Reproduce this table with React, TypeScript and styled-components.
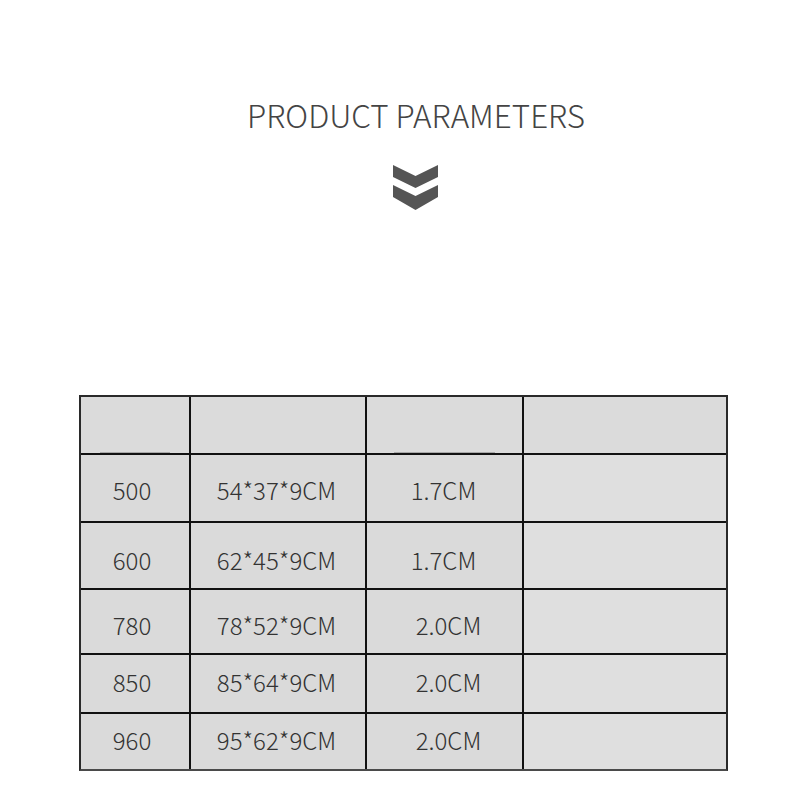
import React from "react";
import styled, { createGlobalStyle } from "styled-components";

interface SpecRow {
  model: string;
  size: string;
  thickness: string;
  height: number;
  lift: number;
  nudge: number;
}

// lift / nudge keep the text where it sits in the original artwork
const specRows: SpecRow[] = [
  { model: "500", size: "54*37*9CM", thickness: "1.7CM", height: 66, lift: 2, nudge: -2 },
  { model: "600", size: "62*45*9CM", thickness: "1.7CM", height: 65, lift: 8, nudge: -2 },
  { model: "780", size: "78*52*9CM", thickness: "2.0CM", height: 63, lift: 6, nudge: 8 },
  { model: "850", size: "85*64*9CM", thickness: "2.0CM", height: 57, lift: -4, nudge: 8 },
  { model: "960", size: "95*62*9CM", thickness: "2.0CM", height: 55, lift: -5, nudge: 8 },
];

const GlobalStyle = createGlobalStyle`
  html, body {
    margin: 0;
    padding: 0;
    background: #ffffff;
  }
  body {
    font-family: "Noto Sans CJK SC", "Noto Sans", "Liberation Sans", sans-serif;
  }
`;

export default function App() {
  return (
    <>
      <GlobalStyle />
      <Page>
        <Heading>
          <Title>PRODUCT PARAMETERS</Title>
          <Chevrons width="45" height="46" viewBox="0 0 45 46">
            <polygon points="0,0 22.5,11 45,0 45,12 22.5,23 0,12" />
            <polygon points="0,20 22.5,31 45,20 45,32 22.5,45 0,32" />
          </Chevrons>
        </Heading>

        <SpecTable>
          <HeadCell mark />
          <HeadCell />
          <HeadCell mark />
          <HeadCell />
          {specRows.map((row) => (
            <React.Fragment key={row.model}>
              <Cell h={row.height} lift={row.lift} nudge={-6}>
                {row.model}
              </Cell>
              <Cell h={row.height} lift={row.lift} nudge={-3}>
                {row.size}
              </Cell>
              <Cell h={row.height} lift={row.lift} nudge={row.nudge}>
                {row.thickness}
              </Cell>
              <Cell h={row.height} light />
            </React.Fragment>
          ))}
        </SpecTable>
      </Page>
    </>
  );
}

const Page = styled.div`
  width: 800px;
  height: 800px;
  display: flex;
  flex-direction: column;
  overflow: hidden;
`;

const Heading = styled.div`
  display: flex;
  flex-direction: column;
  align-items: center;
  padding: 95px 0 0 32px;
  height: 299px;
  box-sizing: border-box;
`;

const Title = styled.h1`
  margin: 0;
  font-size: 31.4px;
  font-weight: 300;
  line-height: 40px;
  color: #444444;
`;

const Chevrons = styled.svg`
  margin-top: 30px;
  margin-left: -2px;
  fill: #555555;
`;

const SpecTable = styled.div`
  margin: 96px 0 0 79px;
  width: 649px;
  box-sizing: border-box;
  display: grid;
  grid-template-columns: 108px 174px 155px 202px;
  gap: 2px;
  background: #111111;
  border: 2px solid #2a2a2a;
  border-bottom-color: #4a4a4a;
`;

const HeadCell = styled.div<{ mark?: boolean }>`
  height: 56px;
  background: #dbdbdb;
  display: flex;
  align-items: flex-end;
  justify-content: center;

  &::after {
    content: "";
    display: ${({ mark }) => (mark ? "block" : "none")};
    width: 65%;
    height: 1px;
    background: #a8a8a8;
  }
`;

const Cell = styled.div<{ h: number; light?: boolean; lift?: number; nudge?: number }>`
  height: ${({ h }) => h}px;
  display: flex;
  align-items: center;
  justify-content: center;
  padding-top: ${({ lift }) => Math.max(lift || 0, 0)}px;
  padding-bottom: ${({ lift }) => Math.max(-(lift || 0), 0)}px;
  padding-left: ${({ nudge }) => Math.max(nudge || 0, 0)}px;
  padding-right: ${({ nudge }) => Math.max(-(nudge || 0), 0)}px;
  box-sizing: border-box;
  background: ${({ light }) => (light ? "#dfdfdf" : "#dadada")};
  color: #333333;
  font-size: 24px;
  font-weight: 300;
`;
